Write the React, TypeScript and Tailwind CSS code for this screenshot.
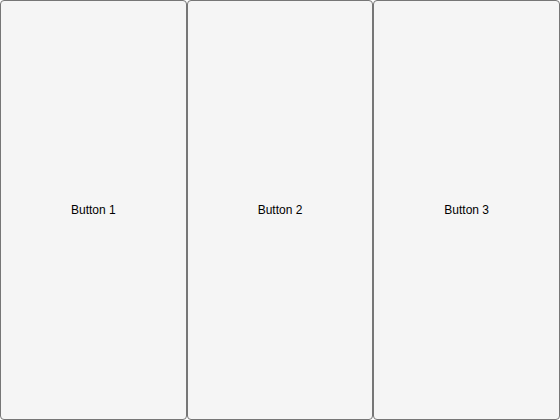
export default function App() {
  const labels = ["Button 1", "Button 2", "Button 3"];
  return (
    <div className="flex h-[420px] w-[560px] bg-white">
      {labels.map((label) => (
        <button
          key={label}
          className="flex flex-1 items-center justify-center rounded-[4px] border border-[#767676] bg-[#f5f5f5] text-[12px] text-black font-['Liberation_Sans',Arial,sans-serif]"
        >
          {label}
        </button>
      ))}
    </div>
  );
}
